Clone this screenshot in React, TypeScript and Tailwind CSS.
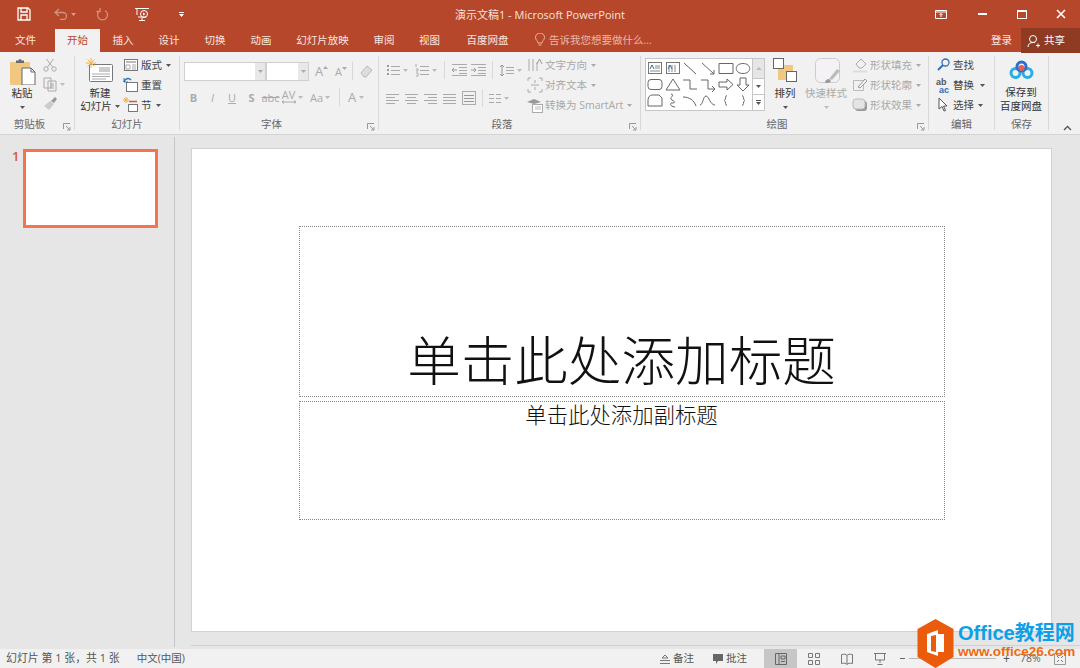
import React from "react";

const FONT = '"Open Sans","Noto Sans CJK SC",sans-serif';

function Caret({ c = "#555", className = "" }: { c?: string; className?: string }) {
  return (
    <svg width="5" height="3" viewBox="0 0 5 3" className={"shrink-0 " + className}>
      <path d="M0 0H5L2.5 3Z" fill={c} />
    </svg>
  );
}

function Launcher() {
  return (
    <svg width="8" height="8" viewBox="0 0 8 8" className="shrink-0">
      <path d="M.5 6V.5H7M3 3l4 4M7 4v3H4" fill="none" stroke="#999" strokeWidth="1" />
    </svg>
  );
}

function Group({ w, label, launcher, children }: { w: number; label: string; launcher?: boolean; children: React.ReactNode }) {
  return (
    <div className="relative my-[4px] flex shrink-0 flex-col border-r border-[#d8d8d8]" style={{ width: w }}>
      <div className="flex h-[59px]">{children}</div>
      <div className={"mt-auto flex h-[14px] items-end justify-center pb-[1px] text-[10.5px] leading-none text-[#666] " + (launcher ? "pr-[15px]" : "")}>{label}</div>
      {launcher && (
        <div className="absolute right-[3px] bottom-[-1px]">
          <Launcher />
        </div>
      )}
    </div>
  );
}

function Ico({ children, w = 16, h = 16, className = "" }: { children: React.ReactNode; w?: number; h?: number; className?: string }) {
  return (
    <svg width={w} height={h} viewBox={`0 0 ${w} ${h}`} fill="none" className={"shrink-0 " + className}>
      {children}
    </svg>
  );
}

function SmallRow({ icon, text, caret, dim }: { icon: React.ReactNode; text: string; caret?: boolean; dim?: boolean }) {
  return (
    <div className={"flex h-[20px] shrink-0 items-center gap-[1px] text-[10.5px] leading-none whitespace-nowrap " + (dim ? "text-[#a8a8a8]" : "text-[#444]")}>
      {icon}
      <span className="ml-[1px]">{text}</span>
      {caret && <Caret c={dim ? "#aaa" : "#555"} className="ml-[3px]" />}
    </div>
  );
}

function Lines({ x = 0, w = 12, ys, c = "#aaa" }: { x?: number; w?: number; ys: number[]; c?: string }) {
  return (
    <>
      {ys.map((y) => (
        <path key={y} d={`M${x} ${y}.5h${w}`} stroke={c} />
      ))}
    </>
  );
}

const G = "#a9a9a9";

function Shape({ d }: { d: string }) {
  return (
    <svg width="18" height="17" viewBox="0 0 18 17" fill="none" className="shrink-0">
      <path d={d} stroke="#666" strokeWidth="1" />
    </svg>
  );
}

function Gallery() {
  const shapes = [
    "",
    "",
    "M3 3l12 11",
    "M3 3l12 11M15 10v4h-4",
    "M2 3.5h14v10H2z",
    "M9 3.5c9 0 9 10 0 10s-9-10 0-10z",
    "M5 3.5h8a3 3 0 013 3v4a3 3 0 01-3 3H5a3 3 0 01-3-3v-4a3 3 0 013-3z",
    "M9 3l7 11H2z",
    "M2 4h7v9h7",
    "M2 4h7v9h6M13 10l3 3-3 3",
    "M2 6h8V3l6 5.5-6 5.5V11H2z",
    "M6 2h6v7h3l-6 6-6-6h3z",
    "M6 3h7l3 3v8H2V8c0-3 2-5 4-5z",
    "M7 2c5 1-3 4 1 6s3 3 0 3-1 4 3 4",
    "M2 5c6 0 11 3 13 9",
    "M1 13c3 0 3-9 6-9s4 9 9 9",
    "M10 3.5c-2 0-1 4-2.500 5 1.500 1 .5 5 2.500 5",
    "M8 3.500c2 0 1 4 2.500 5-1.500 1-.5 5-2.500 5",
  ];
  return (
    <div className="mt-[2px] ml-[4px] flex h-[53px] w-[120px] border border-[#c6c6c6] bg-white">
      <div className="grid w-[108px] grid-cols-6 grid-rows-3 py-[1px]">
        {shapes.map((d, i) =>
          i === 0 || i === 1 ? (
            <svg key={i} width="18" height="17" viewBox="0 0 18 17" fill="none">
              <rect x="2.5" y="2.5" width="13" height="11" stroke="#777" />
              {i === 0 ? <path d="M9 6h5M9 8h5M4 11h10" stroke="#888" /> : <path d="M5 5v7M8 5v7M11 5v7" stroke="#888" />}
              <path d="M4 9l2-4 2 4" stroke="#2f6fb5" />
            </svg>
          ) : (
            <div key={i} className="flex items-center justify-center">
              <Shape d={d} />
            </div>
          )
        )}
      </div>
      <div className="flex w-[12px] flex-col border-l border-[#c6c6c6]">
        <div className="flex h-[19px] items-center justify-center bg-[#e6e6e6]">
          <svg width="6" height="3" viewBox="0 0 6 3"><path d="M0 3L3 0l3 3z" fill="#bbb" /></svg>
        </div>
        <div className="flex h-[17px] items-center justify-center border-y border-[#c6c6c6]">
          <Caret />
        </div>
        <div className="flex flex-1 flex-col items-center justify-center gap-[1px]">
          <div className="h-px w-[5px] bg-[#555]" />
          <Caret />
        </div>
      </div>
    </div>
  );
}

function TitleBar() {
  return (
    <div className="flex h-[28px] items-center text-white">
      <div className="flex w-[200px] items-center">
        <svg width="14" height="14" viewBox="0 0 14 14" fill="none" className="ml-[17px]">
          <path d="M1 1h10l2 2v10H1zM4 1v4h6V1M4 13V8h6v5" stroke="#fff" strokeWidth="1.3" />
        </svg>
        <svg width="14" height="12" viewBox="0 0 14 12" fill="none" className="ml-[23px] opacity-40">
          <path d="M5 1L1 4.5 5 8M1 4.5h8a3.5 3.5 0 010 7H6" stroke="#fff" strokeWidth="1.3" />
        </svg>
        <Caret c="#d99a88" className="ml-[3px]" />
        <svg width="13" height="13" viewBox="0 0 13 13" fill="none" className="ml-[20px] opacity-40">
          <path d="M9 2.500a5 5 0 11-5 0M4 0v3.500H.5" stroke="#fff" strokeWidth="1.3" />
        </svg>
        <svg width="16" height="16" viewBox="0 0 16 16" fill="none" className="ml-[26px]">
          <path d="M0 2.500h14M3 11h8M7 12v2M4 14.500h6M2 3v6" stroke="#fff" />
          <circle cx="9" cy="8" r="3.5" stroke="#fff" />
          <path d="M8 6.500v3l2.500-1.500z" fill="#fff" />
        </svg>
        <div className="ml-[28px] flex flex-col items-center gap-[1px]">
          <div className="h-px w-[5px] bg-white" />
          <Caret c="#fff" />
        </div>
      </div>
      <div className="flex-1 text-center text-[11px] leading-none text-[#f6e2dc]">演示文稿1 - Microsoft PowerPoint</div>
      <div className="flex w-[200px] items-center justify-end">
        <svg width="12" height="9" viewBox="0 0 12 9" className="mr-[31px]" fill="none">
          <path d="M.5.500h11v8H.5zM.5 2h11" stroke="#fff" />
          <path d="M6 7V3.500M4.500 5L6 3.500 7.500 5" stroke="#fff" />
        </svg>
        <div className="mr-[30px] h-[2px] w-[9px] bg-white" />
        <div className="mr-[29px] h-[9px] w-[10px] border border-t-2 border-white" />
        <svg width="10" height="10" viewBox="0 0 10 10" className="mr-[14px]">
          <path d="M1 1l8 8M9 1L1 9" stroke="#fff" strokeWidth="1.6" />
        </svg>
      </div>
    </div>
  );
}

function Tabs() {
  const tabs: [string, number][] = [["文件", 51], ["开始", 45], ["插入", 46], ["设计", 46], ["切换", 46], ["动画", 46], ["幻灯片放映", 77], ["审阅", 46], ["视图", 45], ["百度网盘", 71]];
  return (
    <div className="flex h-[24px] items-stretch text-[10.5px] leading-none text-[#f8e6e0]">
      {tabs.map(([t, w], i) => (
        <div key={t} className={"flex items-center justify-center " + (i === 1 ? "mt-[1px] ml-[4px] bg-[#f1f1f1] text-[#b7472a]" : "")} style={{ width: w }}>
          {t}
        </div>
      ))}
      <div className="ml-[11px] flex items-center gap-[3px] text-[#e8b9ab]">
        <svg width="12" height="14" viewBox="0 0 12 14" fill="none">
          <path d="M4 10c0-2-2.500-3-2.500-5.500a4.500 4.500 0 019 0C10.500 7 8 8 8 10zM4.500 12h3" stroke="#e8b9ab" />
        </svg>
        告诉我您想要做什么...
      </div>
      <div className="ml-auto flex items-center pr-[9px] text-[#fbe9e4]">登录</div>
      <div className="mb-[-1px] flex w-[59px] items-center gap-[4px] bg-[#8f3a22] pl-[6px] text-white">
        <svg width="13" height="14" viewBox="0 0 13 14" fill="none">
          <circle cx="6" cy="5" r="3.5" stroke="#fff" />
          <path d="M1 13c0-3 2-4.500 5-4.500 1 0 1.500 0 2 .3M9 11.500h4M11 9.500v4" stroke="#fff" />
        </svg>
        共享
      </div>
    </div>
  );
}

function Clipboard() {
  return (
    <Group w={75} label="剪贴板" launcher>
      <div className="ml-[8px] flex w-[28px] flex-col items-center text-[10.5px] leading-none text-[#333]">
        <svg width="27" height="27" viewBox="0 0 27 27" className="mt-[2px]" fill="none">
          <rect x="1" y="4" width="20" height="23" rx="1" fill="#f0c881" />
          <path d="M7 5V2.500h2.500a1.500 1.500 0 013 0H15V5z" fill="#6b6b6b" />
          <path d="M13 10h9l4 4v13H13z" fill="#fff" stroke="#666" />
          <path d="M22 10v4h4" stroke="#666" />
        </svg>
        <span className="mt-[3px]">粘贴</span>
        <Caret className="mt-[7px]" />
      </div>
      <div className="ml-[7px] flex flex-col">
        <svg width="14" height="14" viewBox="0 0 14 14" fill="none" className="mt-[2px]">
          <path d="M3.500 1l6 8M10.500 1l-6 8" stroke={G} />
          <circle cx="3" cy="11" r="2.2" stroke={G} />
          <circle cx="11" cy="11" r="2.2" stroke={G} />
        </svg>
        <div className="mt-[5px] flex h-[15px] items-center gap-[3px]">
          <Ico w={14} h={15}>
            <path d="M1 1h7v10H1zM5 4h8v10H5z" stroke={G} fill="#f1f1f1" />
            <path d="M7 7h4M7 9h4M7 11h4" stroke={G} />
          </Ico>
          <Caret c="#bbb" />
        </div>
        <svg width="16" height="14" viewBox="0 0 16 14" fill="none" className="mt-[4px]">
          <path d="M1 10l6-5 4 3-5 6z" fill="#ccc" />
          <path d="M8 5l4-4 2 2-3 4z" fill="#999" />
        </svg>
      </div>
    </Group>
  );
}

function Slides() {
  return (
    <Group w={105} label="幻灯片">
      <div className="ml-[4px] flex w-[42px] flex-col items-center text-[10.5px] leading-[13px] text-[#333]">
        <svg width="27" height="25" viewBox="0 0 27 25" className="mt-[2px] ml-[-1px]" fill="none">
          <rect x="3.5" y="6.5" width="23" height="17" rx="1" fill="#fff" stroke="#777" />
          <rect x="13" y="9" width="11" height="5" fill="#ccc" />
          <path d="M6 16h18M6 18.500h18M6 21h14" stroke="#aaa" />
          <path d="M5 0v10M0 5h10M1.500 1.500l7 7M8.500 1.500l-7 7" stroke="#f0b44c" />
        </svg>
        <span className="mt-[4px]">新建</span>
        <span className="flex items-center gap-[3px] whitespace-nowrap">幻灯片<Caret /></span>
      </div>
      <div className="mt-[-1px] ml-[2px] flex flex-col">
        <SmallRow text="版式" caret icon={<Ico><rect x="1.5" y="2.5" width="13" height="11" fill="#fff" stroke="#777" /><path d="M3 5h10" stroke="#bbb" strokeWidth="2" /><path d="M3 8h4v4H3zM9 8h4M9 10h4M9 12h4" stroke="#aaa" /></Ico>} />
        <SmallRow text="重置" icon={<Ico><rect x="3.5" y="5.5" width="11" height="9" fill="#fff" stroke="#777" /><path d="M1 5a4 4 0 017-2" stroke="#2f77bd" strokeWidth="1.5" /><path d="M1 1v4h4" stroke="#2f77bd" /></Ico>} />
        <SmallRow text="节" caret icon={<Ico><path d="M3 0v6M0 3h6M1 1l4 4M5 1L1 5" stroke="#f0b44c" /><path d="M6 4.500h8" stroke="#e0533d" strokeWidth="1.5" /><rect x="5.5" y="7.5" width="9" height="7" fill="#fff" stroke="#777" /></Ico>} />
      </div>
    </Group>
  );
}

function Font() {
  const b = "flex h-[18px] items-center justify-center text-[11px] leading-none text-[#aaa]";
  return (
    <Group w={199} label="字体" launcher>
      <div className="flex w-full flex-col pl-[4px]">
        <div className="mt-[5px] flex h-[20px] items-center">
          <div className="flex h-[19px] w-[82px] justify-end border border-[#d0d0d0] bg-white">
            <div className="flex w-[10px] items-center justify-center bg-[#e8e8e8]"><Caret c="#aaa" /></div>
          </div>
          <div className="flex h-[19px] w-[43px] justify-end border border-[#d0d0d0] bg-white">
            <div className="flex w-[10px] items-center justify-center bg-[#e8e8e8]"><Caret c="#aaa" /></div>
          </div>
          <span className="ml-[6px] flex w-[19px] items-start text-[13px] leading-none text-[#aaa]">
            A<svg width="5" height="3" viewBox="0 0 5 3" className="mt-[1px]"><path d="M0 3L2.500 0 5 3z" fill="#aaa" /></svg>
          </span>
          <span className="ml-[1px] flex w-[17px] items-start text-[11px] leading-none text-[#aaa]">
            A<Caret c="#aaa" className="mt-[1px]" />
          </span>
          <div className="mr-[6px] h-[18px] w-px bg-[#d8d8d8]" />
          <Ico w={15} h={14}><path d="M2 9l6-7 5 4-6 7H5z" stroke="#bbb" fill="#ddd" /></Ico>
        </div>
        <div className="mt-[6px] flex h-[20px] items-center">
          <span className={b + " w-[19px] font-bold"}>B</span>
          <span className={b + " w-[19px] italic"}>I</span>
          <span className={b + " w-[20px] underline"}>U</span>
          <span className={b + " w-[19px] font-bold"}>S</span>
          <span className={b + " w-[19px] text-[10px] line-through"}>abc</span>
          <span className={b + " w-[24px] gap-[2px] text-[10px]"}>
            <span className="flex flex-col items-center">
              <span className="leading-[10px]">AV</span>
              <svg width="14" height="4" viewBox="0 0 14 4" fill="none"><path d="M0 2h14M2 .5L0 2l2 1.500M12 .5L14 2l-2 1.500" stroke="#aaa" /></svg>
            </span>
            <Caret c="#bbb" />
          </span>
          <span className={b + " ml-[3px] w-[26px] gap-[2px]"}>Aa<Caret c="#bbb" /></span>
          <div className="mx-[6px] h-[18px] w-px bg-[#d8d8d8]" />
          <span className={b + " w-[20px] gap-[3px] text-[13px]"}>A<Caret c="#bbb" /></span>
        </div>
      </div>
    </Group>
  );
}

function Paragraph() {
  return (
    <Group w={262} label="段落" launcher>
      <div className="flex w-[148px] shrink-0 flex-col pl-[7px]">
        <div className="mt-[4px] flex h-[20px] items-center">
          <Ico w={14} h={14}><path d="M1 3h2M1 7h2M1 11h2" stroke="#999" strokeWidth="2" /><Lines x={5} w={9} ys={[3, 7, 11]} /></Ico>
          <Caret c="#bbb" className="ml-[3px]" />
          <Ico w={14} h={14} className="ml-[7px]"><path d="M1 1v3M1 6h2v2H1M1 10h2v3H1" stroke="#aaa" /><Lines x={5} w={9} ys={[3, 7, 11]} /></Ico>
          <Caret c="#bbb" className="ml-[3px]" />
          <div className="mx-[7px] h-[18px] w-px bg-[#d8d8d8]" />
          <Ico w={15} h={14}><Lines x={0} w={15} ys={[1, 12]} /><Lines x={7} w={8} ys={[4, 7, 10]} /><path d="M0 7h5M2 5L0 7l2 2" stroke="#999" /></Ico>
          <Ico w={15} h={14} className="ml-[4px]"><Lines x={0} w={15} ys={[1, 12]} /><Lines x={7} w={8} ys={[4, 7, 10]} /><path d="M0 7h5M3 5l2 2-2 2" stroke="#999" /></Ico>
          <div className="mx-[6px] h-[18px] w-px bg-[#d8d8d8]" />
          <Ico w={15} h={15}><path d="M3 2v11M1 4l2-2 2 2M1 11l2 2 2-2" stroke="#999" /><Lines x={7} w={8} ys={[4, 7, 10]} /></Ico>
          <Caret c="#bbb" className="ml-[3px]" />
        </div>
        <div className="mt-[8px] flex h-[20px] items-center">
          {[0, 1, 2, 3].map((k) => (
            <Ico key={k} w={13} h={12} className="mr-[6px]">
              <Lines x={0} w={13} ys={[2, 8]} />
              <Lines x={k === 1 ? 2 : k === 2 ? 4 : 0} w={k === 3 ? 13 : 9} ys={[5, 11]} />
            </Ico>
          ))}
          <Ico w={14} h={14}><path d="M.5 0v14M13.500 0v14M0 .5h14M0 13.500h14" stroke="#aaa" /><Lines x={2} w={10} ys={[4, 7, 10]} c="#999" /></Ico>
          <div className="mx-[6px] h-[18px] w-px bg-[#d8d8d8]" />
          <Ico w={12} h={12}><Lines x={0} w={5} ys={[2, 6, 10]} /><Lines x={7} w={5} ys={[2, 6, 10]} /></Ico>
          <Caret c="#bbb" className="ml-[3px]" />
        </div>
      </div>
      <div className="mt-[-1px] flex flex-col">
        <SmallRow dim text="文字方向" caret icon={<Ico><path d="M2 2v12M6 2v12M10 5v9" stroke="#aaa" /><path d="M10 7l2.500-5L15 7" stroke="#999" /></Ico>} />
        <SmallRow dim text="对齐文本" caret icon={<Ico><path d="M1 1h3M12 1h3M1 15h3M12 15h3M1 1v3M15 1v3M1 12v3M15 12v3" stroke="#aaa" /><path d="M4 8h8M8 3v3M8 10v3" stroke="#aaa" /></Ico>} />
        <SmallRow dim text="转换为 SmartArt" caret icon={<Ico><path d="M0 5l7-3 7 3-7 2z" fill="#999" /><rect x="5.5" y="7.5" width="10" height="8" fill="#fff" stroke="#aaa" /><path d="M8 10h6M8 12h6" stroke="#bbb" /></Ico>} />
      </div>
    </Group>
  );
}

function Drawing() {
  return (
    <Group w={288} label="绘图" launcher>
      <Gallery />
      <div className="ml-[8px] flex w-[24px] shrink-0 flex-col items-center text-[10.5px] leading-none text-[#333]">
        <svg width="24" height="25" viewBox="0 0 24 25" fill="none" className="mt-[2px]">
          <rect x="5" y="7" width="15" height="15" fill="#f0c881" />
          <rect x=".5" y=".5" width="10" height="10" fill="#fff" stroke="#666" />
          <rect x="13.5" y="13.5" width="10" height="10" fill="#fff" stroke="#666" />
        </svg>
        <span className="mt-[5px]">排列</span>
        <Caret className="mt-[7px]" />
      </div>
      <div className="ml-[7px] flex w-[44px] shrink-0 flex-col items-center text-[10.5px] leading-none text-[#aaa]">
        <svg width="26" height="26" viewBox="0 0 26 26" fill="none" className="mt-[2px] ml-[3px]">
          <rect x=".5" y=".5" width="24" height="24" rx="5" fill="#f5f2f6" stroke="#ccc" />
          <path d="M14 21l8-10 3 2-8 9z" fill="#bbb" />
          <path d="M10 25c0-3 2-4 4-4l2 2c-1 2-3 2-6 2z" fill="#999" />
        </svg>
        <span className="mt-[4px] whitespace-nowrap">快速样式</span>
        <Caret c="#bbb" className="mt-[7px]" />
      </div>
      <div className="mt-[-1px] ml-[4px] flex flex-col">
        <SmallRow dim text="形状填充" caret icon={<Ico><path d="M4 7l5-5 5 5-4 4H7z" stroke="#aaa" /><path d="M1 14.500h14" stroke="#ddd" strokeWidth="2" /></Ico>} />
        <SmallRow dim text="形状轮廓" caret icon={<Ico><path d="M1.500 3.500h10v10h-10z" stroke="#bbb" /><path d="M6 10l7-8 2 2-7 7z" fill="#f1f1f1" stroke="#999" /></Ico>} />
        <SmallRow dim text="形状效果" caret icon={<Ico><rect x="3" y="4" width="12" height="10" rx="3" fill="#999" /><rect x="1" y="2" width="12" height="10" rx="3" fill="#e4e4e4" stroke="#bbb" /></Ico>} />
      </div>
    </Group>
  );
}

function Edit() {
  return (
    <Group w={66} label="编辑">
      <div className="mt-[-1px] ml-[7px] flex flex-col">
        <SmallRow text="查找" icon={<Ico w={15} h={16}><circle cx="9.5" cy="5.5" r="3.5" stroke="#2f6fb5" strokeWidth="1.3" /><path d="M7 8l-5 5" stroke="#2f6fb5" strokeWidth="2" /></Ico>} />
        <div className="flex shrink-0 items-center">
          <SmallRow text="替换" icon={<svg width="15" height="17" viewBox="0 0 15 17" fill="none"><text x="0" y="8" fontSize="9" fontWeight="bold" fill="#555" fontFamily="Liberation Sans">ab</text><text x="3" y="16" fontSize="9" fontWeight="bold" fill="#2f6fb5" fontFamily="Liberation Sans">ac</text></svg>} />
          <Caret className="ml-[6px]" />
        </div>
        <SmallRow text="选择" caret icon={<Ico w={15} h={16}><path d="M3 1v11l3-2.500 2 4.500 1.500-.5-2-4.500h3.500z" stroke="#555" fill="#fff" /></Ico>} />
      </div>
    </Group>
  );
}

function Save() {
  return (
    <Group w={54} label="保存">
      <div className="flex w-full flex-col items-center pr-[1px] text-[10.5px] leading-[14px] text-[#333]">
        <svg width="25" height="21" viewBox="0 0 25 21" fill="none" className="mt-[4px]">
          <circle cx="6.5" cy="13" r="4.5" stroke="#27aee6" strokeWidth="3" />
          <circle cx="18.5" cy="13" r="4.5" stroke="#27aee6" strokeWidth="3" />
          <circle cx="12.5" cy="6.5" r="4.5" stroke="#2a6fd0" strokeWidth="3" />
          <circle cx="12.5" cy="8" r="3" fill="#ef5a5a" />
        </svg>
        <span className="mt-[4px]">保存到</span>
        <span className="whitespace-nowrap">百度网盘</span>
      </div>
    </Group>
  );
}

function Ribbon() {
  return (
    <div className="flex h-[83px] border-b border-[#d4d4d4] bg-[#f1f1f1]">
      <Clipboard />
      <Slides />
      <Font />
      <Paragraph />
      <Drawing />
      <Edit />
      <Save />
      <div className="flex flex-1 items-end justify-end pr-[8px] pb-[3px]">
        <svg width="9" height="6" viewBox="0 0 9 6" fill="none"><path d="M1 5l3.500-3.500L8 5" stroke="#555" strokeWidth="1.3" /></svg>
      </div>
    </div>
  );
}

function Main() {
  return (
    <div className="flex h-[514px] bg-[#e6e6e6]">
      <div className="my-[2px] flex w-[175px] shrink-0 border-r border-[#c6c6c6] pt-[12px] pl-[12px]">
        <span className="w-[11px] text-[13px] leading-[15px] font-semibold text-[#d9593d]">1</span>
        <div className="h-[79px] w-[135px] border-[3px] border-[#f5734d] bg-white" />
      </div>
      <div className="flex-1 pl-[16px]">
        <div className="flex h-[511px] flex-col border-b border-[#d0d0d0]">
          <div className="mt-[13px] flex h-[484px] w-[861px] flex-col items-center border border-[#d2d2d2] bg-white pt-[77px]">
            <div className="flex h-[171px] w-[646px] items-end justify-center border border-dotted border-[#888] pb-[3px] text-[53.6px] leading-[64px] font-light text-[#111]">
              单击此处添加标题
            </div>
            <div className="mt-[4px] flex h-[119px] w-[646px] justify-center border border-dotted border-[#888] text-[21.4px] leading-[26px] font-light text-[#111]">
              单击此处添加副标题
            </div>
          </div>
        </div>
      </div>
    </div>
  );
}

function StatusBar() {
  return (
    <div className="flex h-[19px] items-center bg-[#f1f1f1] text-[10.5px] leading-none text-[#555]">
      <span className="ml-[6px] text-[10.9px]">幻灯片 第 1 张，共 1 张</span>
      <span className="ml-[17px]">中文(中国)</span>
      <div className="ml-auto flex h-full items-center">
        <Ico w={12} h={12} className="mr-[2px]"><path d="M6 2L3 5h6zM1 7.500h10M1 10.500h10" stroke="#777" /></Ico>
        <span>备注</span>
        <Ico w={12} h={12} className="mr-[2px] ml-[18px]"><path d="M1 1h10v7H6L4 11V8H1z" fill="#666" /></Ico>
        <span>批注</span>
        <div className="ml-[17px] flex h-full w-[33px] items-center justify-center bg-[#c6c6c6]">
          <Ico w={12} h={12}><path d="M.5.500h11v11H.5zM4 .5v11M6 3h4v3H6zM6 8.500h4" stroke="#666" /></Ico>
        </div>
        <div className="flex h-full w-[33px] items-center justify-center">
          <Ico w={12} h={12}><path d="M.5.500h4v4h-4zM7.500.500h4v4h-4zM.5 7.500h4v4h-4zM7.500 7.500h4v4h-4z" stroke="#777" /></Ico>
        </div>
        <div className="flex h-full w-[33px] items-center justify-center">
          <Ico w={12} h={12}><path d="M.5 1.500C3 1 5 1 6 2.500c1-1.500 3-1.500 5.500-1v9C9 10 7 10 6 11.500c-1-1.500-3-1.500-5.500-1zM6 2.500v9" stroke="#777" /></Ico>
        </div>
        <div className="flex h-full w-[33px] items-center justify-center">
          <Ico w={12} h={12}><path d="M0 .5h12M1.500 1v6h9V1M6 7v3M3.500 11.500h5" stroke="#777" /></Ico>
        </div>
        <span className="ml-[4px] h-px w-[5px] bg-[#666]" />
        <div className="relative ml-[4px] h-px w-[87px] bg-[#bbb]">
          <div className="absolute top-[-4px] left-[33px] h-[7px] w-[3px] bg-[#666]" />
        </div>
        <span className="ml-[7px] w-[6px] text-center text-[12px]">+</span>
        <span className="ml-[11px] w-[30px] text-[#666]">78%</span>
        <Ico w={12} h={12} className="mr-[14px] ml-[4px]"><path d="M.5.500h11v11H.5z" stroke="#999" /><path d="M3 3l2 2M9 3L7 5M3 9l2-2M9 9L7 7" stroke="#777" /></Ico>
      </div>
    </div>
  );
}

function Watermark() {
  return (
    <div className="absolute right-0 bottom-0 flex h-[50px] w-[163px] items-start">
      <svg width="37" height="49" viewBox="0 0 37 49" className="mt-[1px] shrink-0">
        <path d="M18.500 0L36.500 10V38L18.500 49 .5 38V10z" fill="#ea5b0c" />
        <path d="M10 15L21 11v26l-11-4zM21 15h6v18h-6" fill="#fff" />
        <path d="M14 17l5-1v17l-5-1z" fill="#ea5b0c" />
      </svg>
      <div className="ml-[4px] flex flex-col font-bold whitespace-nowrap">
        <span className="mt-[5px] text-[20px] leading-[21px] text-[#0e9fe8]" style={{ fontFamily: '"Liberation Sans","Noto Sans CJK SC",sans-serif' }}>Office教程网</span>
        <span className="text-[13.5px] leading-[15px] text-[#ee6a10]" style={{ fontFamily: '"Liberation Sans",sans-serif' }}>www.office26.com</span>
      </div>
    </div>
  );
}

export default function App() {
  return (
    <div className="relative h-[668px] w-[1080px] overflow-hidden bg-[#b7472a]" style={{ fontFamily: FONT }}>
      <TitleBar />
      <Tabs />
      <Ribbon />
      <Main />
      <StatusBar />
      <Watermark />
    </div>
  );
}
